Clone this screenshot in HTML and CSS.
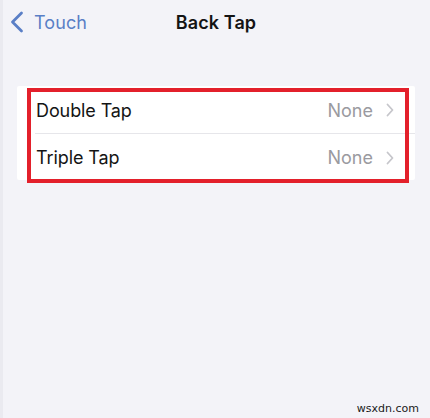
FILE: index.html
```html
<!DOCTYPE html>
<html lang="en">
<head>
<meta charset="utf-8">
<title>Back Tap</title>
<link rel="stylesheet" href="styles.css">
</head>
<body>
<div class="screen">
  <header class="navbar">
    <a class="back" href="#">
      <svg class="back-chevron" width="14" height="22" viewBox="0 0 14 22" aria-hidden="true">
        <path d="M11.5 2 L2.5 11 L11.5 20" fill="none" stroke="currentColor" stroke-width="2.8" stroke-linecap="round" stroke-linejoin="round"/>
      </svg>
      <span>Touch</span>
    </a>
    <h1 class="title">Back Tap</h1>
  </header>

  <main class="content">
    <section class="group">
      <div class="row">
        <span class="label">Double Tap</span>
        <span class="value">None</span>
        <svg class="chevron" width="8" height="14" viewBox="0 0 8 14" aria-hidden="true">
          <path d="M1.5 1.5 L6.5 7 L1.5 12.5" fill="none" stroke="currentColor" stroke-width="1.8" stroke-linecap="round" stroke-linejoin="round"/>
        </svg>
      </div>
      <div class="row">
        <span class="label">Triple Tap</span>
        <span class="value">None</span>
        <svg class="chevron" width="8" height="14" viewBox="0 0 8 14" aria-hidden="true">
          <path d="M1.5 1.5 L6.5 7 L1.5 12.5" fill="none" stroke="currentColor" stroke-width="1.8" stroke-linecap="round" stroke-linejoin="round"/>
        </svg>
      </div>
      <div class="highlight"></div>
    </section>
  </main>

  <footer class="credit">wsxdn.com</footer>
</div>
</body>
</html>
```

FILE: styles.css
```css
html, body {
  margin: 0;
  padding: 0;
}

body {
  background: #f2f2f7;
  font-family: Inter, "Noto Sans", "Liberation Sans", sans-serif;
  color: #111;
}

.screen {
  width: 430px;
  height: 418px;
  display: flex;
  flex-direction: column;
  background: #f3f3f8;
  border-left: 3px solid #eaeaf0;
  box-sizing: border-box;
  overflow: hidden;
}

.navbar {
  height: 44px;
  display: grid;
  grid-template-columns: 1fr auto 1fr;
  align-items: center;
}

.back {
  display: flex;
  align-items: center;
  gap: 10px;
  padding-left: 7px;
  color: #5a7fc6;
  text-decoration: none;
  font-size: 18px;
  letter-spacing: 0.1px;
}

.back-chevron {
  display: block;
}

.title {
  margin: 0;
  font-size: 18px;
  font-weight: 600;
  color: #141414;
  letter-spacing: 0.1px;
  padding-right: 1px;
}

.content {
  padding: 42px 15px 0 14px;
}

.group {
  position: relative;
  background: #ffffff;
  border-radius: 2px;
}

.row {
  height: 47px;
  display: flex;
  align-items: center;
  padding: 1px 21px 0 19px;
  box-sizing: border-box;
  position: relative;
}

.row + .row {
  border-top: 1px solid #e6e6ea;
  margin-left: 18px;
  padding-left: 1px;
}

.label {
  flex: 1;
  font-size: 18px;
  color: #141414;
  letter-spacing: -0.1px;
}

.value {
  font-size: 18px;
  color: #9a9aa0;
  margin-right: 13px;
}

.chevron {
  color: #c6c6cb;
  display: block;
}

/* red annotation frame drawn over the settings group */
.highlight {
  position: absolute;
  left: 10px;
  right: 6px;
  top: 2px;
  bottom: -3px;
  border: 4px solid #e3202b;
  pointer-events: none;
}

.credit {
  margin-top: auto;
  align-self: flex-end;
  padding: 0 11px 3px 0;
  font-family: "DejaVu Sans", "Liberation Sans", sans-serif;
  font-size: 11px;
  color: #1a1a1a;
}
```
